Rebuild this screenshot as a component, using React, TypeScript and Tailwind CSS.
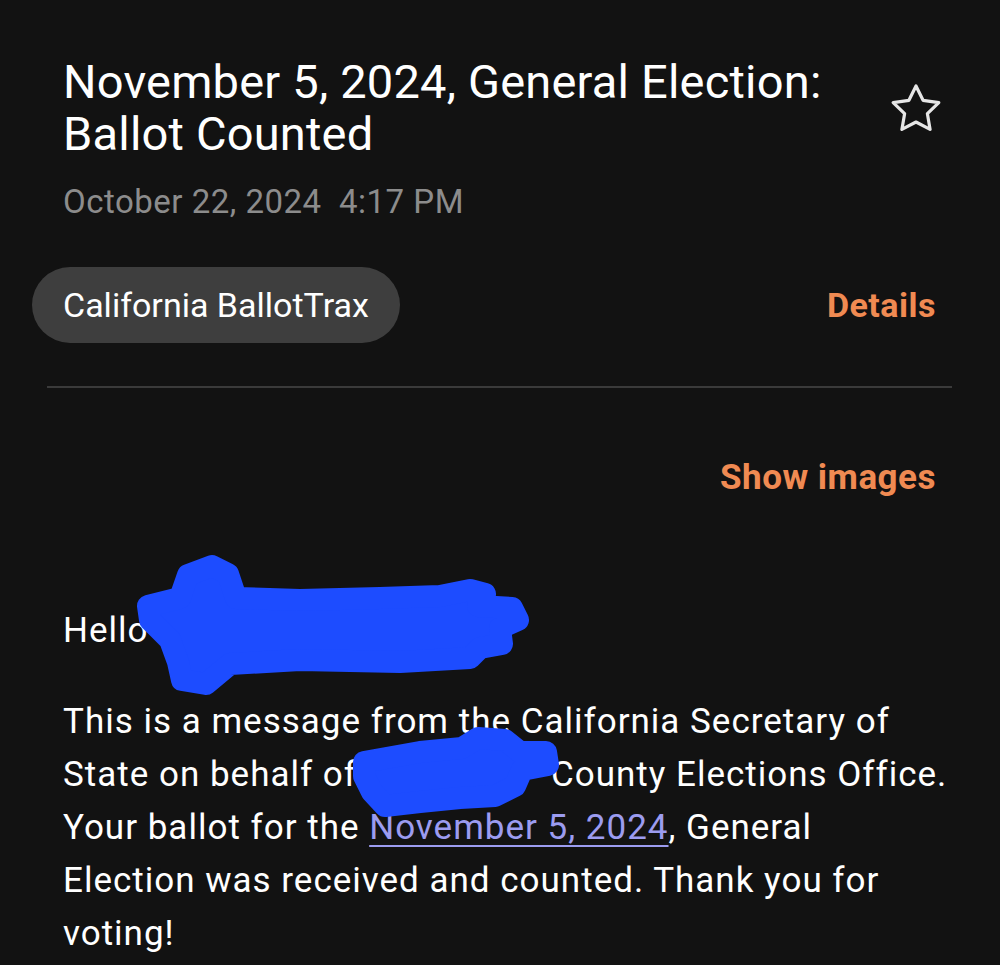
import React from "react";

function Star() {
  return (
    <svg width="50" height="50" viewBox="0 0 50 50" fill="none" stroke="#e6e6e6" strokeWidth="3.2" strokeLinejoin="round">
      <path d="M25 3 L32.05 17.3 L47.8 19.6 L36.4 30.7 L39.1 46.4 L25 39 L10.9 46.4 L13.6 30.7 L2.2 19.6 L17.95 17.3 Z" />
    </svg>
  );
}

function Scribbles() {
  return (
    <svg className="pointer-events-none absolute left-0 top-0" width="1000" height="965" viewBox="0 0 1000 965">
      <g fill="#1d4cff" stroke="#1d4cff" strokeWidth="22" strokeLinejoin="round" strokeLinecap="round">
        <path d="M148,606 L180,598 L188,575 L212,566 L228,574 L236,598 L300,600 L380,598 L440,596 L470,590 L485,594 L478,606 L512,608 L518,620 L500,628 L502,644 L480,648 L470,658 L400,662 L300,660 L230,664 L206,684 L182,680 L178,662 L170,640 L150,620 Z" />
        <path d="M364,762 L420,752 L462,748 L478,738 L505,740 L520,752 L546,752 L548,765 L522,770 L515,786 L495,796 L460,798 L420,802 L385,806 L372,792 L364,776 Z" />
      </g>
    </svg>
  );
}

export default function App() {
  return (
    <div
      className="relative min-h-[965px] w-[1000px] overflow-hidden bg-[#121212] text-white"
      style={{ fontFamily: "Roboto, 'Noto Sans', sans-serif" }}
    >
      <div className="pl-[63px] pr-[64px] pt-[56px]">
        <div className="flex items-start justify-between">
          <h1 className="text-[47px] leading-[52px] font-normal tracking-[0.2px]">
            November 5, 2024, General Election:
            <br />
            Ballot Counted
          </h1>
          <div className="-mr-[5px] mt-[27px]">
            <Star />
          </div>
        </div>
        <div className="mt-[22px] text-[33px] leading-[40px] tracking-[0.5px] text-[#8c8c8c]">
          October 22, 2024&nbsp;&nbsp;4:17 PM
        </div>
        <div className="mt-[45px] flex items-center justify-between">
          <div className="-ml-[31px] flex h-[76px] items-center rounded-full bg-[#3e3e3e] px-[31px] text-[34px]">
            California BallotTrax
          </div>
          <div className="text-[34px] font-bold tracking-[0.5px] text-[#f08a52]">Details</div>
        </div>
      </div>
      <div className="ml-[47px] mr-[48px] mt-[43px] h-[2px] bg-[#3a3a3a]" />
      <div className="pl-[63px] pr-[40px]">
        <div className="mr-[24px] mt-[70px] flex justify-end text-[35px] font-bold leading-[40px] tracking-[0.5px] text-[#f08a52]">
          Show images
        </div>
        <div className="mt-[106px] text-[35px] leading-[53px] tracking-[1px]">Hello</div>
        <p className="mt-[38px] whitespace-nowrap text-[35px] leading-[53px] tracking-[1px]">
          This is a message from the California Secretary of
          <br />
          State on behalf of<span className="inline-block w-[194px]" />County Elections Office.
          <br />
          Your ballot for the{" "}
          <span className="text-[#9c9cf0] underline decoration-[2px] underline-offset-[6px]">November 5, 2024</span>, General
          <br />
          Election was received and counted. Thank you for
          <br />
          voting!
        </p>
      </div>
      <Scribbles />
    </div>
  );
}
